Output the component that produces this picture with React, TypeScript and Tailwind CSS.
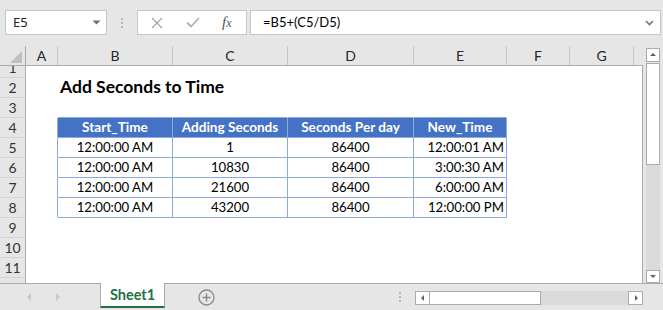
import React from 'react';

const COLS = ['A', 'B', 'C', 'D', 'E', 'F', 'G'];
const COL_W = ['w-[32px]', 'w-[115px]', 'w-[115px]', 'w-[126px]', 'w-[93px]', 'w-[63px]', 'w-[64px]'];

const header = ['Start_Time', 'Adding Seconds', 'Seconds Per day', 'New_Time'];
const data = [
    ['12:00:00 AM', '1', '86400', '12:00:01 AM'],
    ['12:00:00 AM', '10830', '86400', '3:00:30 AM'],
    ['12:00:00 AM', '21600', '86400', '6:00:00 AM'],
    ['12:00:00 AM', '43200', '86400', '12:00:00 PM'],
];

const ROWS = [2, 3, 4, 5, 6, 7, 8, 9, 10, 11];

const Cell: React.FC<{ row: number; col: number }> = ({ row, col }) => {
    const inTable = row >= 4 && row <= 8;
    // blue borders around the table (B..E, rows 4-8), A carries the left edge
    let border = 'border-transparent';
    if (inTable && col >= 0 && col <= 4) border = 'border-[#8ea9db]';
    if (row === 3 && col >= 1 && col <= 4) border = 'border-b-[#8ea9db] border-r-transparent';
    if (inTable && col === 0) border = 'border-r-[#8ea9db] border-b-transparent';

    let content: React.ReactNode = null;
    let cls = 'text-[13.2px]';
    if (row === 2 && col === 1) {
        content = <span className="pl-[2px] text-[17.5px] font-bold whitespace-nowrap">Add Seconds to Time</span>;
        cls = 'items-center overflow-visible';
    } else if (row === 4 && col >= 1 && col <= 4) {
        content = header[col - 1];
        cls = 'text-[13.6px] bg-[#4472c4] text-white font-bold justify-center items-center';
    } else if (row >= 5 && row <= 8 && col >= 1 && col <= 4) {
        content = data[row - 5][col - 1];
        cls = col === 4 ? 'text-[13.2px] justify-end pr-[2px] items-center' : 'text-[13.2px] justify-center items-center';
    }

    return (
        <div className={`${COL_W[col]} h-full flex border-r border-b ${border} ${cls} text-black whitespace-nowrap`}>
            {content}
        </div>
    );
};

const RowHead: React.FC<{ n: number }> = ({ n }) => (
    <div className="w-[26px] h-full shrink-0 flex items-center justify-center bg-[#e6e6e6] border-r border-b border-r-[#ababab] border-b-[#d4d4d4] text-[14px] text-[#333]">
        {n}
    </div>
);

const Dots: React.FC<{ className?: string }> = ({ className }) => (
    <div className={`flex flex-col gap-[2px] ${className}`}>
        <div className="w-[2px] h-[2px] bg-[#b8b8b8]" />
        <div className="w-[2px] h-[2px] bg-[#b8b8b8]" />
        <div className="w-[2px] h-[2px] bg-[#b8b8b8]" />
    </div>
);

const ScrollBtn: React.FC<{ dir: 'up' | 'down' | 'left' | 'right'; className?: string }> = ({ dir, className }) => {
    const pts = {
        up: '2,6 8,6 5,3',
        down: '2,3 8,3 5,6',
        left: '6,2 6,8 3,5',
        right: '4,2 4,8 7,5',
    }[dir];
    return (
        <div className={`bg-white border border-[#ababab] flex items-center justify-center ${className}`}>
            <svg width="10" height="10" viewBox="0 0 10 10">
                <polygon points={pts} fill="#606060" />
            </svg>
        </div>
    );
};

export default function App() {
    return (
        <div className="w-[663px] h-[310px] bg-[#e6e6e6] overflow-hidden flex flex-col font-['Lato',sans-serif] select-none">
            {/* Formula bar */}
            <div className="h-[45px] shrink-0 flex items-start pt-[10px]">
                <div className="ml-[5px] w-[102px] h-[25px] bg-white border border-[#c6c6c6] flex items-center justify-between pl-[7px] pr-[5px]">
                    <span className="text-[13px] text-[#222] font-['Noto_Sans',sans-serif]">E5</span>
                    <svg width="9" height="5" viewBox="0 0 9 5">
                        <polygon points="0.5,0.5 8.5,0.5 4.5,4.5" fill="#707070" />
                    </svg>
                </div>
                <div className="w-[30px] h-[25px] flex items-center justify-center">
                    <Dots />
                </div>
                <div className="w-[110px] h-[25px] bg-white border border-[#c6c6c6] flex items-center">
                    <svg width="12" height="12" viewBox="0 0 12 12" className="ml-[13px]">
                        <path d="M1 1 L11 11 M11 1 L1 11" stroke="#a6a6a6" strokeWidth="1.3" />
                    </svg>
                    <svg width="14" height="11" viewBox="0 0 14 11" className="ml-[23px]">
                        <path d="M1 5.5 L5 9.5 L13 1" stroke="#b0b0b0" strokeWidth="1.8" fill="none" />
                    </svg>
                    <span className="ml-[22px] text-[15px] italic text-[#555] font-['Liberation_Serif',serif] leading-none">
                        f<span className="text-[12px]">x</span>
                    </span>
                </div>
                <div className="ml-[3px] w-[411px] h-[25px] bg-white border border-[#c6c6c6] flex items-center justify-between pl-[12px] pr-[6px]">
                    <span className="text-[13px] text-black">=B5+(C5/D5)</span>
                    <svg width="9" height="6" viewBox="0 0 9 6">
                        <path d="M1 1 L4.5 4.5 L8 1" stroke="#777" strokeWidth="1.6" fill="none" />
                    </svg>
                </div>
            </div>

            {/* Grid + vertical scrollbar */}
            <div className="h-[238px] shrink-0 flex">
                <div className="w-[643px] flex flex-col">
                    {/* column headers */}
                    <div className="h-[21px] shrink-0 flex border-b border-[#ababab]">
                        <div className="w-[26px] pt-[5px] pr-[3px] flex justify-end border-r border-[#ababab] mt-[1px]">
                            <svg width="12" height="12" viewBox="0 0 12 12">
                                <polygon points="12,0 12,12 0,12" fill="#bfbfbf" />
                            </svg>
                        </div>
                        {COLS.map((c, i) => (
                            <div
                                key={c}
                                className={`${COL_W[i]} mt-[1px] border-r border-[#c6c6c6] flex items-center justify-center text-[14px] text-[#262626]`}
                            >
                                {c}
                            </div>
                        ))}
                    </div>

                    <div className="flex-1 flex flex-col border-r border-[#ababab] overflow-hidden">
                        {/* row 1, scrolled partly out of view */}
                        <div className="h-[12px] shrink-0 overflow-hidden flex flex-col justify-end">
                            <div className="h-[20px] shrink-0 flex bg-white">
                                <RowHead n={1} />
                                {COLS.map((c, i) => (
                                    <Cell key={c} row={1} col={i} />
                                ))}
                            </div>
                        </div>
                        {ROWS.map(r => (
                            <div key={r} className="h-[20px] shrink-0 flex bg-white">
                                <RowHead n={r} />
                                {COLS.map((c, i) => (
                                    <Cell key={c} row={r} col={i} />
                                ))}
                            </div>
                        ))}
                        <div className="flex-1 flex bg-white">
                            <div className="w-[26px] bg-[#e6e6e6] border-r border-[#ababab]" />
                        </div>
                    </div>
                </div>

                <div className="w-[20px] flex flex-col items-center pt-[3px]">
                    <ScrollBtn dir="up" className="w-[14px] h-[14px] shrink-0" />
                    <div className="w-[14px] h-[102px] shrink-0 mt-[1px] bg-white border border-[#ababab]" />
                    <div className="w-[14px] flex-1 bg-[#dadada]" />
                    <ScrollBtn dir="down" className="w-[14px] h-[13px] shrink-0" />
                </div>
            </div>

            {/* Sheet tabs */}
            <div className="h-[27px] shrink-0 flex">
                <div className="w-[100px] border-t border-[#ababab] flex items-center pb-[1px]">
                    <svg width="6" height="8" viewBox="0 0 6 8" className="ml-[26px]">
                        <polygon points="5,0 5,8 1,4" fill="#c8c8c8" />
                    </svg>
                    <svg width="6" height="8" viewBox="0 0 6 8" className="ml-[23px]">
                        <polygon points="1,0 1,8 5,4" fill="#c8c8c8" />
                    </svg>
                </div>
                <div className="w-[65px] h-[25px] bg-white border-x border-[#ababab] border-b-2 border-b-[#217346] flex items-center justify-center">
                    <span className="text-[14.5px] font-bold text-[#217346]">Sheet1</span>
                </div>
                <div className="flex-1 border-t border-[#ababab] flex items-start">
                    <svg width="17" height="17" viewBox="0 0 17 17" className="ml-[33px] mt-[5px]">
                        <circle cx="8.5" cy="8.5" r="7.5" stroke="#8a8a8a" strokeWidth="1.3" fill="none" />
                        <path d="M8.5 4.5 V12.5 M4.5 8.5 H12.5" stroke="#8a8a8a" strokeWidth="1.4" />
                    </svg>
                    <Dots className="ml-[184px] mt-[8px]" />
                    <div className="ml-[14px] mt-[7px] flex h-[14px]">
                        <ScrollBtn dir="left" className="w-[15px] h-[14px]" />
                        <div className="w-[111px] h-[14px] bg-white border-y border-r border-[#ababab]" />
                        <div className="w-[87px] h-[14px] bg-[#dadada]" />
                        <ScrollBtn dir="right" className="w-[15px] h-[14px]" />
                    </div>
                </div>
            </div>
        </div>
    );
}
